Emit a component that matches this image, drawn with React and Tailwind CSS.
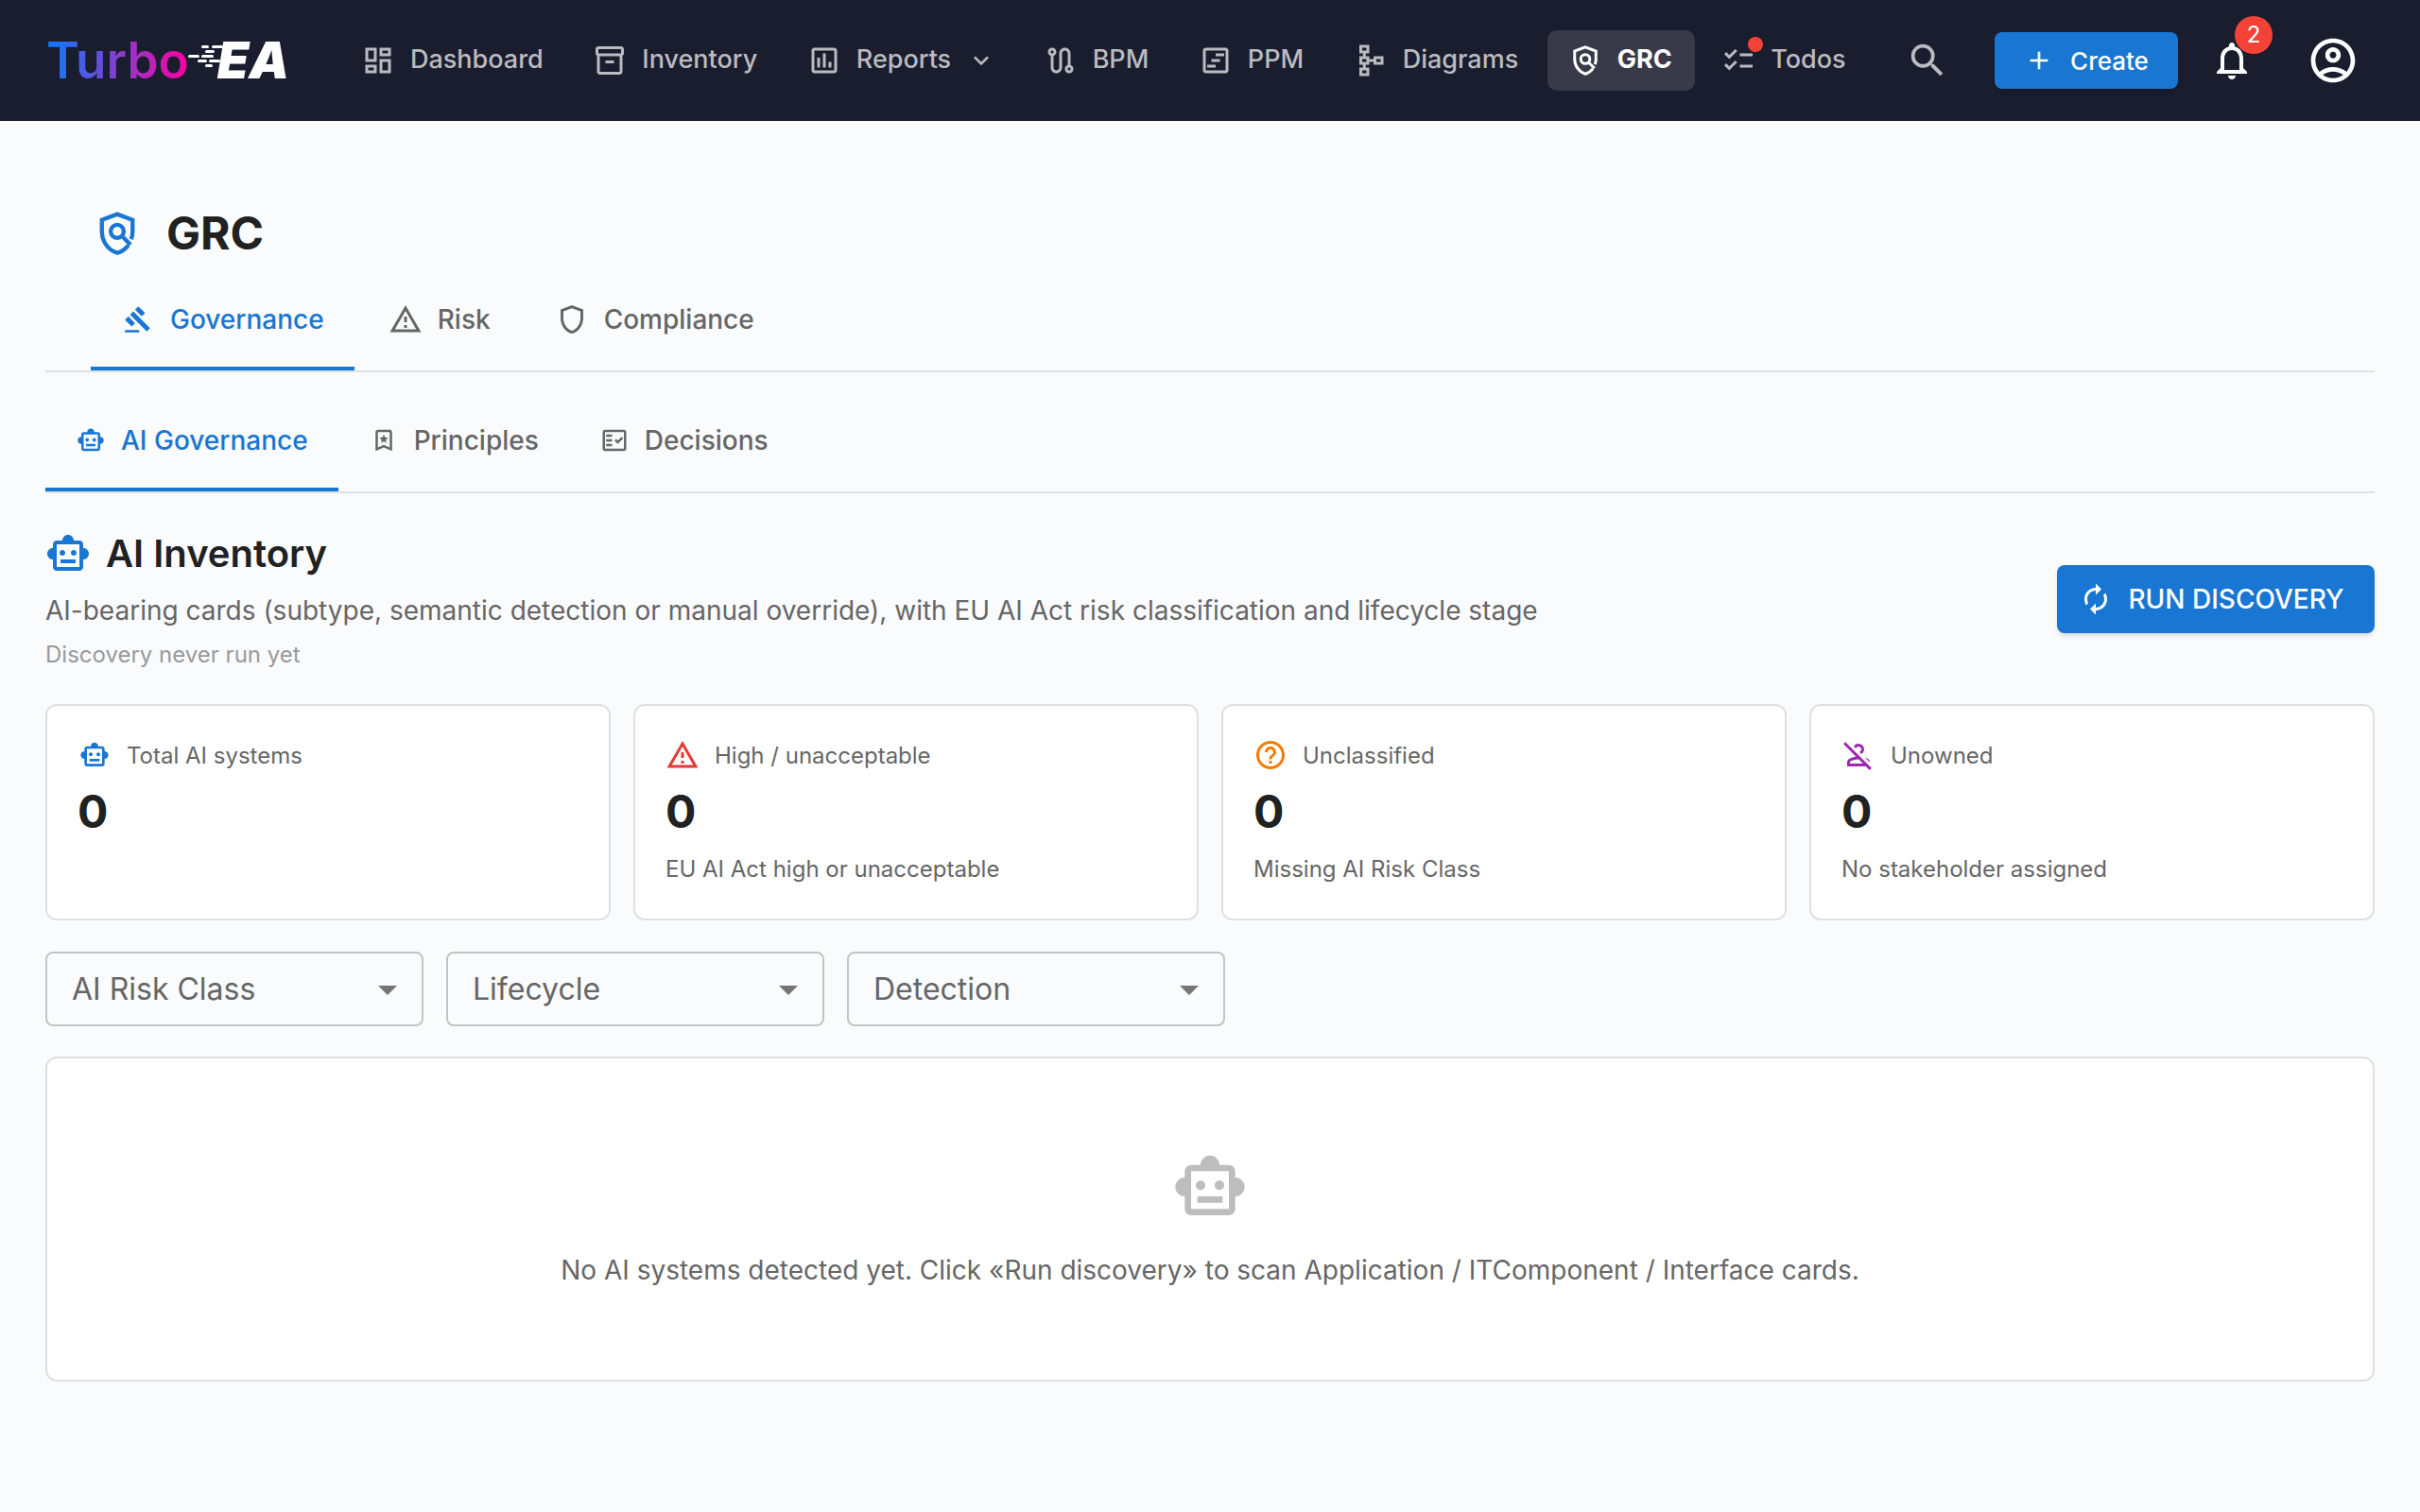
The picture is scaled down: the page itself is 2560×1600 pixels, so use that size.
import React from 'react';
import {
  MdOutlineDashboard, MdOutlineInventory2, MdOutlineAssessment, MdOutlineRoute, MdOutlineViewTimeline,
  MdOutlineSchema, MdOutlineChecklist, MdSearch, MdAdd, MdOutlineNotifications,
  MdOutlineAccountCircle, MdOutlineGavel, MdOutlineWarningAmber, MdOutlineShield, MdOutlineSmartToy,
  MdOutlineFactCheck, MdAutorenew, MdOutlineHelpOutline, MdOutlinePersonOff, MdKeyboardArrowDown, MdArrowDropDown,
} from 'react-icons/md';

const BookmarkStar = ({ size = 30 }) => (
  <svg width={size} height={size} viewBox="0 0 24 24" fill="currentColor">
    <path d="M17 3H7c-1.1 0-2 .9-2 2v16l7-3 7 3V5c0-1.1-.9-2-2-2zm0 15-5-2.18L7 18V5h10v13z" />
    <path d="M12 7l1.1 2.4 2.6.3-1.9 1.8.5 2.6-2.3-1.3-2.3 1.3.5-2.6-1.9-1.8 2.6-.3z" />
  </svg>
);

// shield with a magnifier, the outline is open where the handle leaves
const PolicyIcon = ({ size = 36, className }) => (
  <svg width={size} height={size} viewBox="0 0 24 24" fill="none" stroke="currentColor" strokeWidth="2" className={className}>
    <path d="M17.4 17.8C16 19.6 14.2 20.9 12 21.5 7.7 20.2 4.5 16 4.5 11.1V5.4L12 2.6l7.5 2.8v5.7c0 1.3-.2 2.5-.7 3.7" />
    <circle cx="12" cy="11" r="3.2" />
    <path d="M14.3 13.3l4.2 4.2" />
  </svg>
);

const Logo = () => (
  <div className="relative flex items-center w-[255px] h-[60px] -ml-[1px] leading-none">
    <span className="text-[53px] font-semibold text-transparent bg-clip-text bg-linear-to-r/srgb from-[#0a7cff] to-[#ff00a0]">Turbo</span>
    <span className="ml-[30px] text-[54px] font-black italic text-white">EA</span>
    <svg className="absolute left-[150px] top-[12px]" width="90" height="40" viewBox="0 0 90 40" fill="white">
      <rect x="14" y="2" width="8" height="3" rx="1.5" />
      <rect x="25" y="2" width="12" height="3" rx="1.5" />
      <rect x="18" y="7" width="10" height="3" rx="1.5" />
      <rect x="0" y="12" width="12" height="3" rx="1.5" />
      <rect x="14" y="12" width="13" height="3" rx="1.5" />
      <rect x="10" y="17" width="10" height="3" rx="1.5" />
      <rect x="22" y="17" width="12" height="3" rx="1.5" />
      <rect x="18" y="22" width="8" height="3" rx="1.5" />
    </svg>
  </div>
);

const navItems = [
  { label: 'Dashboard', icon: MdOutlineDashboard },
  { label: 'Inventory', icon: MdOutlineInventory2 },
  { label: 'Reports', icon: MdOutlineAssessment, chevron: true },
  { label: 'BPM', icon: MdOutlineRoute },
  { label: 'PPM', icon: MdOutlineViewTimeline },
  { label: 'Diagrams', icon: MdOutlineSchema },
  { label: 'GRC', icon: PolicyIcon, active: true },
  { label: 'Todos', icon: MdOutlineChecklist, dot: true },
];

const NavItem = ({ label, icon: Icon, active, chevron, dot }) => (
  <button
    className={`relative flex items-center h-[64px] pl-[20px] pr-[24px] gap-[14px] rounded-[10px] text-[27px] ${
      active ? 'bg-[#383a49] text-white font-bold' : 'text-[#babbc0] font-medium'
    }`}
  >
    <Icon size={36} className="mx-[2px]" />
    <span className="pb-[1px]">{label}</span>
    {chevron && <MdKeyboardArrowDown size={32} className="ml-[2px] mr-[-3px]" />}
    {dot && <span className="absolute left-[50px] top-[7px] w-[16px] h-[16px] rounded-full bg-[#f44336]" />}
  </button>
);

const Navbar = () => (
  <header className="flex items-center h-[128px] pl-[50px] pr-[64px] bg-[#1a1d2e]">
    <Logo />
    <nav className="flex items-center gap-[6.5px] ml-[56px]">
      {navItems.map((item) => (
        <NavItem key={item.label} {...item} />
      ))}
    </nav>
    <div className="flex items-center ml-auto">
      <MdSearch size={46} className="text-[#babbc0]" />
      <button className="flex items-center justify-center gap-[17px] w-[194px] h-[60px] ml-[48px] rounded-[8px] bg-[#1976d2] text-white text-[26px] font-medium shadow-md">
        <MdAdd size={32} />
        Create
      </button>
      <div className="relative ml-[33px]">
        <MdOutlineNotifications size={48} className="text-white" />
        <span className="absolute left-[27px] top-[-23px] flex items-center justify-center w-[40px] h-[40px] rounded-full bg-[#f44336] text-white text-[24px]">2</span>
      </div>
      <MdOutlineAccountCircle size={56} className="ml-[55px] text-white" />
    </div>
  </header>
);

const Tab = ({ label, icon: Icon, size, active, iconBox }) => (
  <div
    className={`flex items-center gap-[16px] h-[108px] px-[32px] pt-[3px] border-b-4 text-[28px] font-medium ${
      active ? 'border-[#1976d2] text-[#1976d2]' : 'border-transparent text-[#666666]'
    }`}
  >
    <span className="flex items-center justify-center shrink-0" style={{ width: iconBox }}>
      <Icon size={size} />
    </span>
    {label}
  </div>
);

const StatCard = ({ icon: Icon, iconSize = 36, color, label, sub }) => (
  <div className="h-[229px] px-[32px] pt-[32px] bg-white border-2 border-[#e0e0e0] rounded-[12px]">
    <div className="flex items-center h-[40px] gap-[16px] text-[24px] text-[#666666]">
      <span className={`flex items-center justify-center w-[36px] ${color}`}>
        <Icon size={iconSize} />
      </span>
      <span className="pt-[2px]">{label}</span>
    </div>
    <div className="mt-[10px] text-[48px] leading-[59px] font-bold text-[#212121]">0</div>
    {sub && <div className="mt-[12px] text-[24px] leading-[39px] text-[#666666]">{sub}</div>}
  </div>
);

const FilterSelect = ({ label }) => (
  <div className="flex items-center justify-between w-[400px] h-[79px] pl-[26px] pr-[12px] border-2 border-[#c4c4c4] rounded-[8px] text-[32px] text-[#666666]">
    {label}
    <MdArrowDropDown size={48} className="text-[#757575]" />
  </div>
);

export default function App() {
  return (
    <div className="min-h-[1600px] bg-[#fafbfd] font-['Inter',sans-serif]">
      <Navbar />
      <main className="px-12 pt-[90px]">
        <div className="flex items-center h-[58px] pl-[50px] gap-[26px]">
          <PolicyIcon size={52} className="text-[#1976d2]" />
          <h1 className="text-[48px] font-bold text-[#212121]">GRC</h1>
        </div>

        <div className="flex gap-[4px] mt-[8px] pl-[48px] border-b-2 border-[#e0e0e0]">
          <Tab label="Governance" icon={MdOutlineGavel} size={30} iconBox={36} active />
          <Tab label="Risk" icon={MdOutlineWarningAmber} size={36} iconBox={36} />
          <Tab label="Compliance" icon={MdOutlineShield} size={36} iconBox={36} />
        </div>

        <div className="flex mt-[18px] border-b-2 border-[#e0e0e0]">
          <Tab label="AI Governance" icon={MdOutlineSmartToy} size={30} iconBox={32} active />
          <Tab label="Principles" icon={BookmarkStar} size={30} iconBox={32} />
          <Tab label="Decisions" icon={MdOutlineFactCheck} size={30} iconBox={32} />
        </div>

        <section className="flex items-center justify-between mt-[40px]">
          <div>
            <div className="flex items-center h-[48px] gap-[16px]">
              <MdOutlineSmartToy size={48} className="text-[#1976d2]" />
              <h2 className="text-[40px] font-semibold text-[#212121]">AI Inventory</h2>
            </div>
            <p className="mt-[14px] text-[28px] leading-[45px] text-[#666666]">
              AI-bearing cards (subtype, semantic detection or manual override), with EU AI Act risk classification and lifecycle stage
            </p>
            <p className="mt-[6px] text-[24px] leading-[36px] text-[#999999]">Discovery never run yet</p>
          </div>
          <button className="flex items-center justify-center gap-[16px] w-[336px] h-[72px] mb-[6px] pr-[9px] rounded-[8px] bg-[#1976d2] text-white text-[28px] font-medium shadow-md">
            <MdAutorenew size={36} />
            RUN DISCOVERY
          </button>
        </section>

        <div className="grid grid-cols-4 gap-[24px] mt-[34px]">
          <StatCard icon={MdOutlineSmartToy} iconSize={32} color="text-[#1976d2]" label="Total AI systems" />
          <StatCard icon={MdOutlineWarningAmber} color="text-[#e53935]" label="High / unacceptable" sub="EU AI Act high or unacceptable" />
          <StatCard icon={MdOutlineHelpOutline} color="text-[#f57c00]" label="Unclassified" sub="Missing AI Risk Class" />
          <StatCard icon={MdOutlinePersonOff} color="text-[#9c27b0]" label="Unowned" sub="No stakeholder assigned" />
        </div>

        <div className="flex gap-[24px] mt-[33px]">
          <FilterSelect label="AI Risk Class" />
          <FilterSelect label="Lifecycle" />
          <FilterSelect label="Detection" />
        </div>

        <div className="flex flex-col items-center h-[344px] mt-[32px] pt-[96px] bg-white border-2 border-[#e0e0e0] rounded-[12px]">
          <MdOutlineSmartToy size={80} className="text-[#bdbdbd]" />
          <p className="mt-[26px] text-[28px] leading-[45px] text-[#666666]">
            No AI systems detected yet. Click «Run discovery» to scan Application / ITComponent / Interface cards.
          </p>
        </div>
      </main>
    </div>
  );
}
